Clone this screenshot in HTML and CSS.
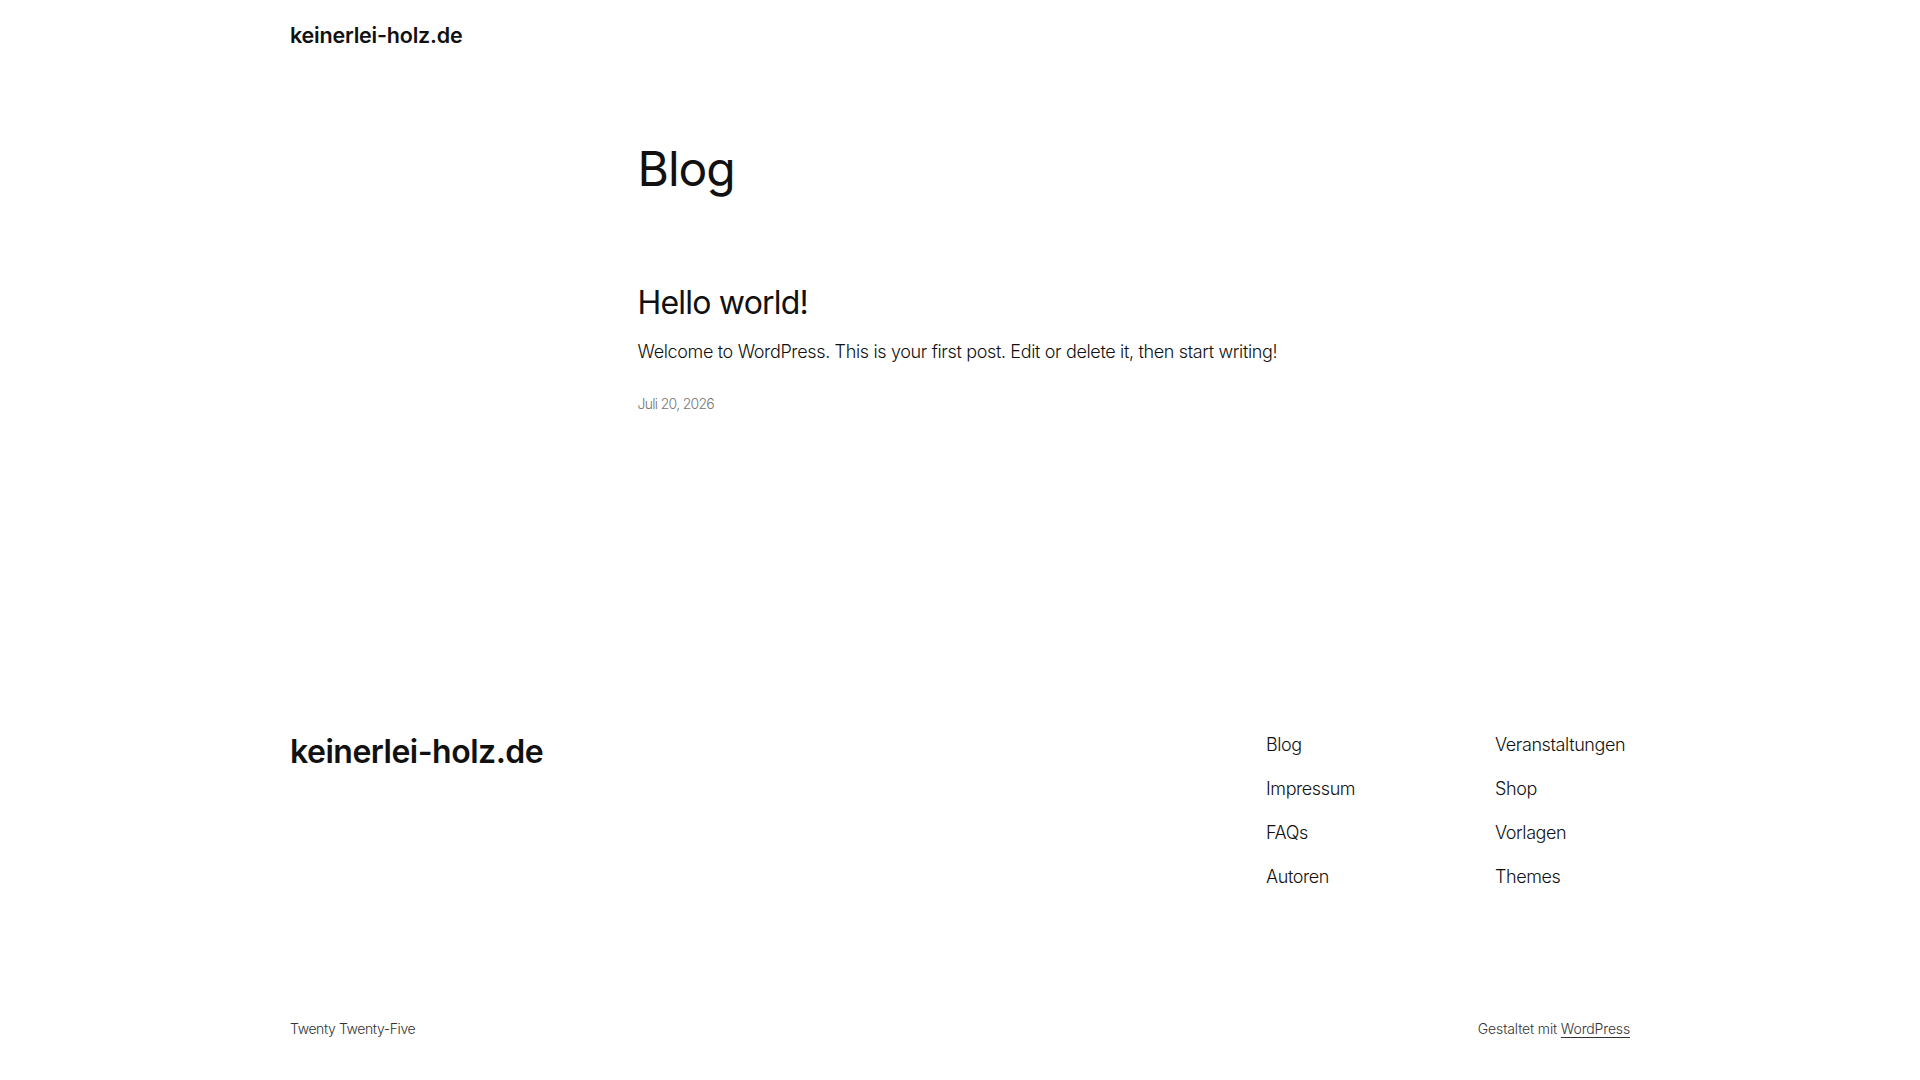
FILE: index.html
```html
<!DOCTYPE html>
<html lang="de">
<head>
<meta charset="utf-8">
<title>Blog – keinerlei-holz.de</title>
<link rel="stylesheet" href="styles.css">
</head>
<body>
<header class="site-header">
  <div class="wide">
    <a class="site-title" href="#">keinerlei-holz.de</a>
  </div>
</header>
<main class="site-main">
  <div class="content">
    <h1 class="page-title">Blog</h1>
    <article class="post">
      <h2 class="post-title"><a href="#">Hello world!</a></h2>
      <p class="post-excerpt">Welcome to WordPress. This is your first post. Edit or delete it, then start writing!</p>
      <time class="post-date">Juli 20, 2026</time>
    </article>
  </div>
</main>
<footer class="site-footer">
  <div class="wide">
    <div class="footer-top">
      <a class="footer-title" href="#">keinerlei-holz.de</a>
      <nav class="footer-nav">
        <ul class="nav-col">
          <li><a href="#">Blog</a></li>
          <li><a href="#">Impressum</a></li>
          <li><a href="#">FAQs</a></li>
          <li><a href="#">Autoren</a></li>
        </ul>
        <ul class="nav-col">
          <li><a href="#">Veranstaltungen</a></li>
          <li><a href="#">Shop</a></li>
          <li><a href="#">Vorlagen</a></li>
          <li><a href="#">Themes</a></li>
        </ul>
      </nav>
    </div>
    <div class="footer-bottom">
      <span class="footer-theme">Twenty Twenty-Five</span>
      <span class="footer-credit">Gestaltet mit <a href="#">WordPress</a></span>
    </div>
  </div>
</footer>
</body>
</html>
```

FILE: styles.css
```css
* { box-sizing: border-box; }

html, body {
  margin: 0;
  padding: 0;
  background: #ffffff;
}

body {
  font-family: Inter, "Noto Sans", "Liberation Sans", sans-serif;
  color: #111111;
  font-weight: 300;
  font-size: 18px;
  line-height: 1.4;
  letter-spacing: -0.1px;
}

a { color: inherit; text-decoration: none; }

.wide {
  max-width: 1340px;
  margin: 0 auto;
}

/* Header */
.site-header {
  padding: 21px 0 20px;
}

.site-title {
  display: block;
  font-size: 21.5px;
  line-height: 28px;
  font-weight: 600;
  letter-spacing: -0.2px;
  width: max-content;
}

/* Main */
.site-main {
  padding-top: 71px;
}

.content {
  max-width: 645px;
  margin: 0 auto;
}

.page-title {
  margin: 0;
  font-size: 48px;
  line-height: 57.6px;
  font-weight: 400;
  letter-spacing: -1px;
}

.post {
  margin-top: 86px;
}

.post-title {
  margin: 0;
  font-size: 32px;
  line-height: 38.4px;
  font-weight: 400;
  letter-spacing: -0.8px;
}

.post-excerpt {
  margin: 17px 0 0;
  font-size: 18px;
  line-height: 25.2px;
  letter-spacing: -0.35px;
}

.post-date {
  display: block;
  margin-top: 30px;
  font-size: 14px;
  line-height: 19.6px;
  color: #777777;
  letter-spacing: -0.7px;
}

/* Footer */
.site-footer {
  padding-top: 318px;
  padding-bottom: 41px;
}

.footer-top {
  display: flex;
  justify-content: space-between;
  align-items: flex-start;
}

.footer-title {
  display: block;
  font-size: 32px;
  line-height: 38.4px;
  font-weight: 600;
  letter-spacing: -0.5px;
  margin-top: 1px;
}

.footer-nav {
  display: grid;
  grid-template-columns: 229px 135px;
}

.nav-col {
  list-style: none;
  margin: 0;
  padding: 0;
  display: flex;
  flex-direction: column;
  gap: 19px;
}

.nav-col li {
  font-size: 18px;
  line-height: 25.2px;
  letter-spacing: -0.4px;
  white-space: nowrap;
}

.footer-bottom {
  margin-top: 129px;
  display: flex;
  justify-content: space-between;
  align-items: center;
  font-size: 14px;
  line-height: 19.6px;
  color: #333333;
}

.footer-theme {
  letter-spacing: -0.4px;
}

.footer-credit {
  letter-spacing: -0.15px;
}

.footer-credit a {
  text-decoration: underline;
  text-underline-offset: 3px;
  text-decoration-thickness: 1px;
}
```
